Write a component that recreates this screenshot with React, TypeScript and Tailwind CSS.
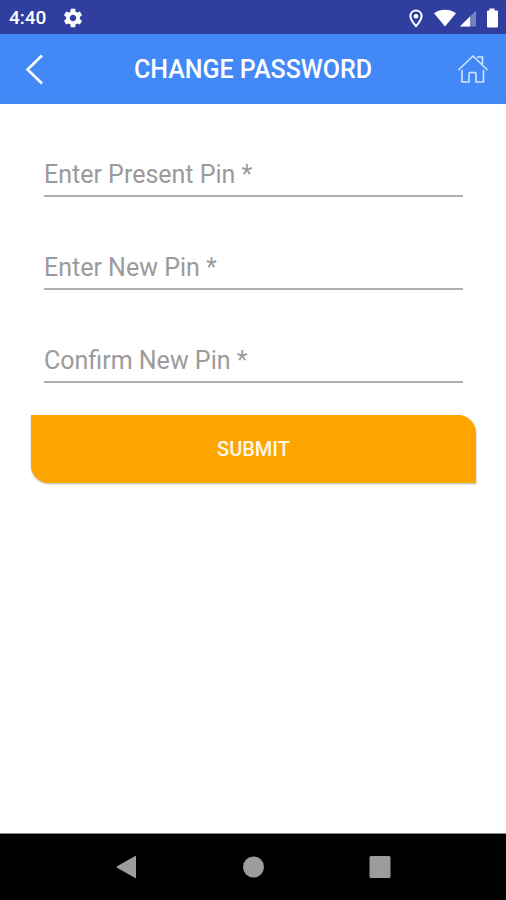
import type { FormEvent } from 'react'

interface Field {
  id: string
  label: string
}

const FIELDS: Field[] = [
  { id: 'present-pin', label: 'Enter Present Pin *' },
  { id: 'new-pin', label: 'Enter New Pin *' },
  { id: 'confirm-pin', label: 'Confirm New Pin *' },
]

function StatusBar() {
  return (
    <div className="flex h-[34px] items-center justify-between bg-[#303f9f] pt-px pl-[9px] pr-[7px] text-white">
      <div className="flex items-center gap-4">
        <span className="text-[19px] leading-6 font-medium">4:40</span>
        <svg className="size-[22px]" viewBox="0 0 24 24" fill="currentColor" aria-hidden="true">
          <path d="M19.43 12.98c.04-.32.07-.64.07-.98s-.03-.66-.07-.98l2.11-1.65c.19-.15.24-.42.12-.64l-2-3.46c-.12-.22-.39-.3-.61-.22l-2.49 1c-.52-.4-1.08-.73-1.69-.98l-.38-2.65C14.46 2.18 14.25 2 14 2h-4c-.25 0-.46.18-.49.42l-.38 2.65c-.61.25-1.17.59-1.69.98l-2.49-1c-.23-.09-.49 0-.61.22l-2 3.46c-.13.22-.07.49.12.64l2.11 1.65c-.04.32-.07.65-.07.98s.03.66.07.98l-2.11 1.65c-.19.15-.24.42-.12.64l2 3.46c.12.22.39.3.61.22l2.49-1c.52.4 1.08.73 1.69.98l.38 2.65c.03.24.24.42.49.42h4c.25 0 .46-.18.49-.42l.38-2.65c.61-.25 1.17-.59 1.69-.98l2.49 1c.23.09.49 0 .61-.22l2-3.46c.12-.22.07-.49-.12-.64l-2.11-1.65zM12 15.5c-1.93 0-3.5-1.57-3.5-3.5s1.57-3.5 3.5-3.5 3.5 1.57 3.5 3.5-1.57 3.5-3.5 3.5z" />
        </svg>
      </div>
      {/* location, wifi, signal, battery */}
      <svg className="h-5 w-[90px]" viewBox="409 7 90 20" fill="currentColor" aria-hidden="true">
        <path d="M416 9.600c-3.200 0-5.600 2.400-5.600 5.500 0 3.800 5.600 10.100 5.600 10.100s5.600-6.300 5.600-10.100c0-3.100-2.400-5.500-5.600-5.500z" fill="none" stroke="currentColor" strokeWidth="2" />
        <circle cx="416" cy="15.200" r="2.300" />
        <path d="M434 12.200C440.500 7.600 449.500 7.600 456 12.200L445 25.600z" />
        <path d="M476 9.500V25.500H460z" opacity="0.350" />
        <path d="M470 15.500V25.500H460z" />
        <path d="M489.500 7.500h5v2h2.500q1 0 1 1v15q0 1-1 1h-9q-1 0-1-1v-15q0-1 1-1h1.500z" />
      </svg>
    </div>
  )
}

function Header() {
  return (
    <header className="flex h-[70px] items-center justify-between border-b border-[#3f84ee] bg-[#4289f7] px-[15px] pt-[3px] text-white">
      <button type="button" aria-label="Back" className="flex size-9 items-center justify-center">
        <svg className="size-8" viewBox="0 0 32 32" fill="none" stroke="currentColor" strokeWidth="2.600" aria-hidden="true">
          <path d="M25 1.500L10.500 15.500 25 29.500" />
        </svg>
      </button>
      <h1 className="text-[25px] leading-8 font-medium">CHANGE PASSWORD</h1>
      <button type="button" aria-label="Home" className="flex size-9 items-center justify-center">
        <svg className="size-8" viewBox="0 0 32 32" fill="none" stroke="#d4e5ff" strokeWidth="1.600" aria-hidden="true">
          <path d="M1.500 16L16 2l14.500 14" />
          <path d="M20 3h5.500v7" />
          <path d="M5 16v12h7v-8q0-1.500 1.500-1.500h4q1.500 0 1.500 1.500v8h7.500V16" />
        </svg>
      </button>
    </header>
  )
}

function PinField({ id, label }: Field) {
  return (
    <div className="relative flex">
      <input
        id={id}
        type="password"
        placeholder=" "
        className="peer h-11 w-full border-b-2 border-[#aeaeae] bg-transparent text-[25px] text-[#444444] outline-none"
      />
      {/* hint sits over the empty input and hides once something is typed */}
      <label
        htmlFor={id}
        className="invisible absolute inset-x-0 top-1.5 text-[25px] leading-8 text-[#9b9b9b] peer-placeholder-shown:visible"
      >
        {label}
      </label>
    </div>
  )
}

function NavBar() {
  return (
    <nav className="h-[67px] border-t border-[#8a8a8a] bg-black text-[#9c9c9c]">
      <div className="mx-auto grid h-full w-3/4 grid-cols-3 place-items-center">
        <button type="button" aria-label="System back">
          <svg className="size-6" viewBox="0 0 24 24" fill="currentColor" aria-hidden="true">
            <path d="M21 1.300v21.400q0 .8-.8.300L2 12.700q-1-.7 0-1.400L20.200 1q.8-.5.800.300z" />
          </svg>
        </button>
        <button type="button" aria-label="System home">
          <svg className="size-6" viewBox="0 0 24 24" fill="currentColor" aria-hidden="true">
            <circle cx="12.500" cy="12" r="10.500" />
          </svg>
        </button>
        <button type="button" aria-label="Recent apps">
          <svg className="size-6" viewBox="0 0 24 24" fill="currentColor" aria-hidden="true">
            <rect x="1.500" y="1" width="21" height="22" rx="1.500" />
          </svg>
        </button>
      </div>
    </nav>
  )
}

export default function App() {
  const handleSubmit = (e: FormEvent) => e.preventDefault()

  return (
    <div className="flex min-h-screen flex-col bg-white font-['Roboto',sans-serif]">
      <StatusBar />
      <Header />
      <main className="flex-1 pt-[49px] pr-[30px] pl-[31px]">
        <form onSubmit={handleSubmit}>
          <div className="flex flex-col gap-[49px] px-[13px]">
            {FIELDS.map(f => (
              <PinField key={f.id} id={f.id} label={f.label} />
            ))}
          </div>
          <button
            type="submit"
            className="mt-8 h-[68px] w-full rounded-tr-[18px] rounded-bl-[18px] bg-[#ffa500] text-xl font-medium text-[#fff8ea] shadow-[0_1px_2px_rgba(0,0,0,0.3)]"
          >
            SUBMIT
          </button>
        </form>
      </main>
      <NavBar />
    </div>
  )
}
